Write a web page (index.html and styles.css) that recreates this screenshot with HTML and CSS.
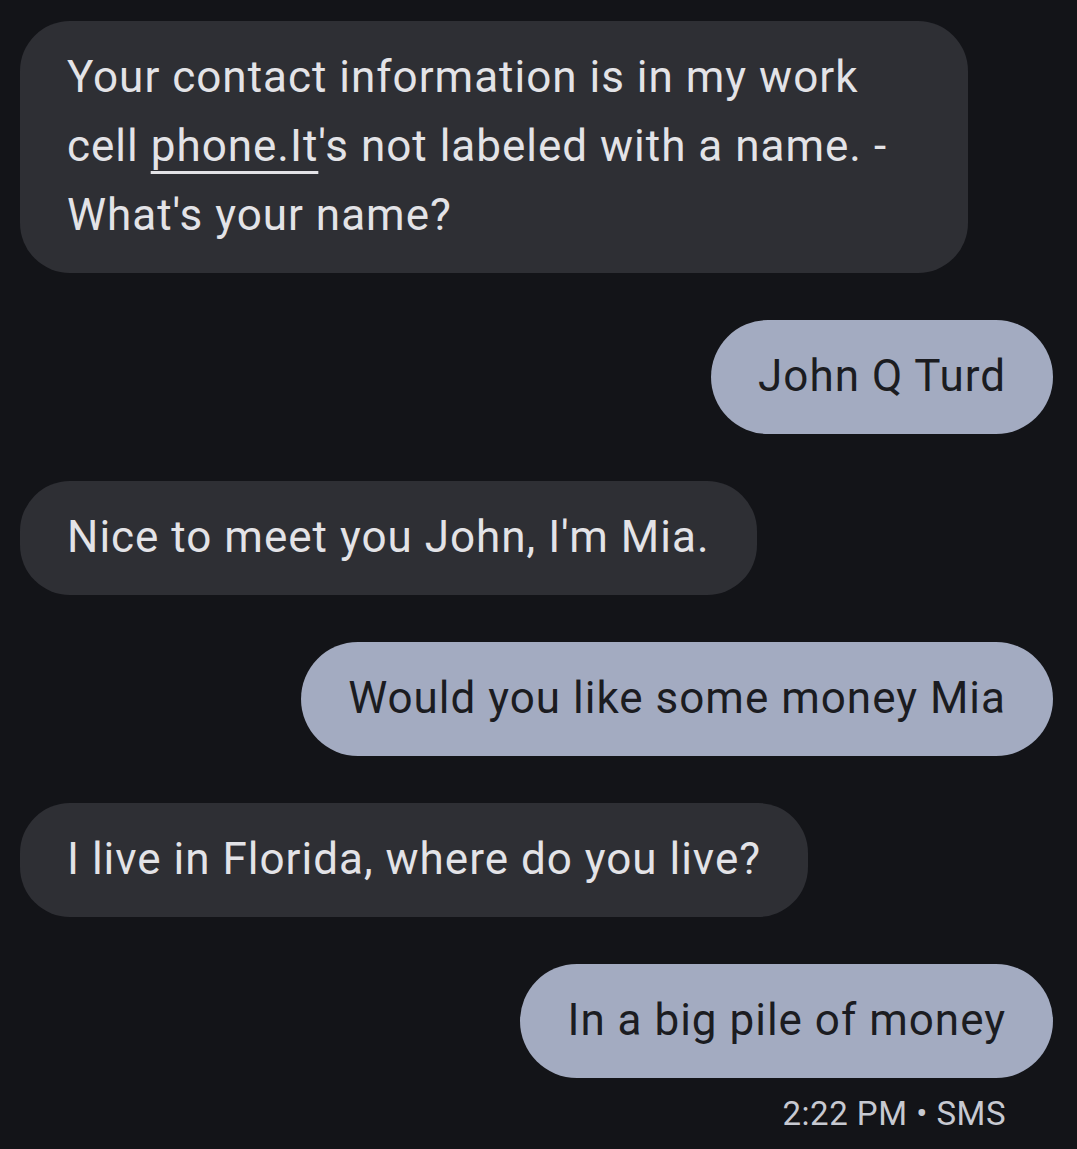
FILE: index.html
```html
<!DOCTYPE html>
<html>
<head>
<meta charset="utf-8">
<link rel="stylesheet" href="styles.css">
</head>
<body>
<div class="thread">
  <div class="msg in wrapped">Your contact information is in my work<br>cell <span class="link">phone.It</span>'s not labeled with a name. -<br>What's your name?</div>
  <div class="msg out">John Q Turd</div>
  <div class="msg in">Nice to meet you John, I'm Mia.</div>
  <div class="msg out">Would you like some money Mia</div>
  <div class="msg in">I live in Florida, where do you live?</div>
  <div class="msg out">In a big pile of money</div>
  <div class="meta">2:22 PM • SMS</div>
</div>
</body>
</html>
```
FILE: styles.css
```css
html, body {
  margin: 0;
  padding: 0;
  background: #131418;
}
body {
  font-family: Roboto, "Noto Sans", sans-serif;
  width: 1077px;
  height: 1149px;
  overflow: hidden;
}
.thread {
  display: flex;
  flex-direction: column;
  gap: 47px;
  padding: 21px 24px 0 20px;
}
.msg {
  font-size: 44px;
  letter-spacing: 1px;
  line-height: 69px;
  padding: 22px 47px 23px 47px;
  border-radius: 57px;
  width: fit-content;
  white-space: nowrap;
}
.msg.wrapped {
  width: 854px;
}
.msg.in {
  align-self: flex-start;
  background: #2e2f34;
  color: #e3e3e7;
  border-radius: 50px;
}
.msg.out {
  align-self: flex-end;
  background: #a3abc1;
  color: #1b1c21;
}
.link {
  text-decoration: underline;
  text-decoration-thickness: 3px;
  text-underline-offset: 10px;
  text-decoration-skip-ink: none;
}
.meta {
  align-self: flex-end;
  margin-top: -31px;
  margin-right: 47px;
  font-size: 33px;
  letter-spacing: 0.5px;
  color: #c7c9d1;
}
```
